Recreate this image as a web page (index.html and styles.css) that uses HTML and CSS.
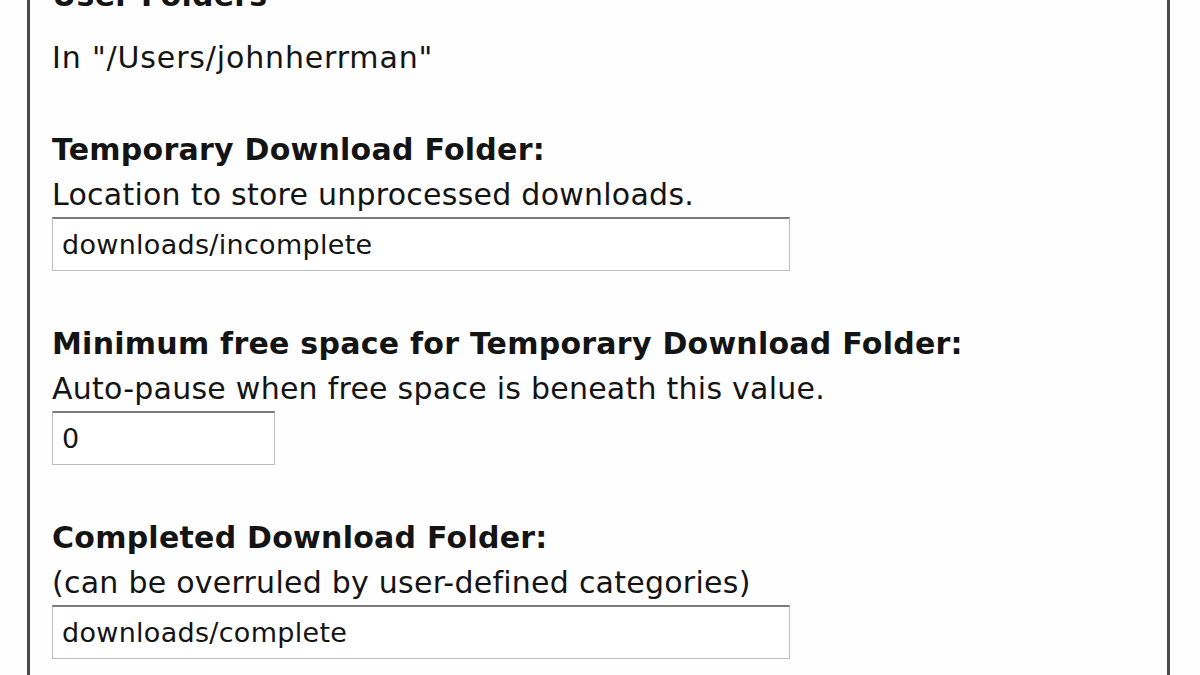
FILE: index.html
```html
<!DOCTYPE html>
<html lang="en">
<head>
    <meta charset="UTF-8">
    <title>Folders</title>
    <link rel="stylesheet" href="styles.css">
</head>
<body>
    <div class="panel">
        <h3 class="panel-title">User Folders</h3>
        <p class="note">In "/Users/johnherrman"</p>

        <div class="field">
            <label for="tmpDir">Temporary Download Folder:</label>
            <p class="hint">Location to store unprocessed downloads.</p>
            <input type="text" id="tmpDir" class="text-input wide" value="downloads/incomplete">
        </div>

        <div class="field">
            <label for="minFree">Minimum free space for Temporary Download Folder:</label>
            <p class="hint">Auto-pause when free space is beneath this value.</p>
            <input type="text" id="minFree" class="text-input short" value="0">
        </div>

        <div class="field">
            <label for="doneDir">Completed Download Folder:</label>
            <p class="hint">(can be overruled by user-defined categories)</p>
            <input type="text" id="doneDir" class="text-input wide" value="downloads/complete">
        </div>
    </div>
</body>
</html>
```

FILE: styles.css
```css
* {
    margin: 0;
    padding: 0;
    box-sizing: border-box;
}

body {
    background-color: #fefefe;
    color: #141414;
    font-family: "DejaVu Sans", Verdana, sans-serif;
    font-size: 30px;
    letter-spacing: 0.25px;
    line-height: 45px;
    overflow: hidden;
    height: 675px;
}

.panel {
    margin: -27px 0 0 27px;
    width: 1143px;
    border: 3px solid #4a4a4a;
    border-top: none;
    padding: 0 0 40px 22px;
}

.panel-title {
    font-size: 30px;
    font-weight: bold;
}

.note {
    margin: 17px 0 47px;
    letter-spacing: 0.85px;
}

.field {
    margin-bottom: 50px;
}

.field label {
    display: block;
    font-weight: bold;
}

.text-input {
    display: block;
    height: 54px;
    padding: 0 9px;
    font-family: "DejaVu Sans", Verdana, sans-serif;
    font-size: 27px;
    letter-spacing: 0.3px;
    color: #141414;
    background: #fff;
    border: 1px solid #bdbdbd;
    border-top: 2px solid #7a7a7a;
    outline: none;
}

.text-input.wide {
    width: 738px;
}

.text-input.short {
    width: 223px;
}
```
